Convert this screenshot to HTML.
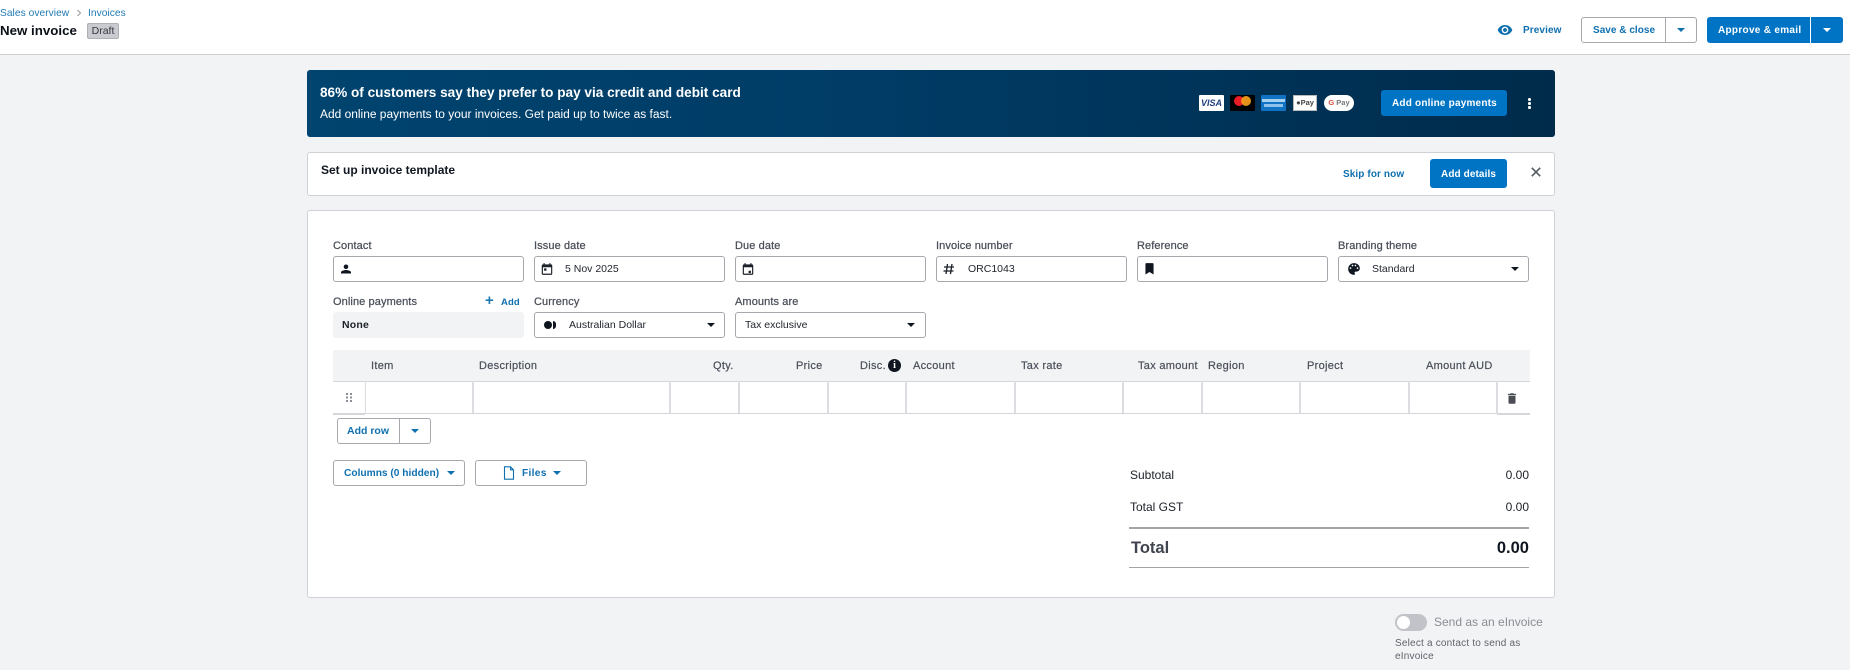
<!DOCTYPE html>
<html><head><meta charset="utf-8"><title>New invoice</title>
<style>
html,body{margin:0;padding:0;width:1850px;height:670px;overflow:hidden;background:#f2f3f5;font-family:"Liberation Sans",sans-serif;color:#0f1620}
.a{position:absolute}
.t{position:absolute;white-space:nowrap;line-height:16px;font-size:11px}
.l{color:#4a4f59;letter-spacing:.1px;-webkit-text-stroke:.25px #4a4f59}
.b{color:#0f70b0;font-weight:700;font-size:10px;letter-spacing:.1px}
.box{position:absolute;box-sizing:border-box;background:#fff;border:1px solid #a6a8ad;border-radius:3px}
.btn{position:absolute;box-sizing:border-box;background:#0074c4;border-radius:3px}
.w{color:#fff;font-weight:700;font-size:10px;letter-spacing:.2px}
.v{color:#22262e;font-size:10.5px}
.th{color:#4a4f59;letter-spacing:.3px;-webkit-text-stroke:.2px #4a4f59}
.caret{position:absolute;width:0;height:0;border-left:4.5px solid transparent;border-right:4.5px solid transparent;border-top:4px solid #0f70b0}
.caret.k{border-top-color:#0f1620}
.caret.wh{border-top-color:#fff}
.vl{position:absolute;top:381px;height:32px;width:2px;background:#dcdde0}
svg{position:absolute;display:block}
</style></head><body>
<div class="a" style="left:0;top:0;width:1850px;height:54px;background:#fff;border-bottom:1px solid #ccced2"></div>
<div class="t" style="left:0;top:6px;color:#1f7ab3;letter-spacing:.05px;font-size:10.2px">Sales overview</div>
<svg style="left:76px;top:9px" width="6" height="8" viewBox="0 0 6 8"><path d="M1.500 1l3 3-3 3" fill="none" stroke="#999" stroke-width="1"/></svg>
<div class="t" style="left:88px;top:6px;color:#1f7ab3;letter-spacing:.05px;font-size:10.2px">Invoices</div>
<div class="t" style="left:0;top:23px;font-size:13.3px;font-weight:700;color:#0b0f18">New invoice</div>
<div class="a" style="left:87px;top:23px;width:32px;height:16px;box-sizing:border-box;background:#c9cbd0;border:1px solid #aeb0b5;border-radius:2px;font-size:10.5px;line-height:14px;text-align:center;color:#33373f">Draft</div>

<svg style="left:1497px;top:22px" width="16" height="16" viewBox="0 0 24 24"><path fill="#0f70b0" d="M12 4.500C7 4.500 2.730 7.610 1 12c1.730 4.390 6 7.500 11 7.500s9.270-3.110 11-7.500c-1.730-4.390-6-7.500-11-7.500zM12 17c-2.760 0-5-2.240-5-5s2.240-5 5-5 5 2.240 5 5-2.240 5-5 5zm0-8c-1.660 0-3 1.340-3 3s1.340 3 3 3 3-1.340 3-3-1.340-3-3-3z"/></svg>
<div class="t b" style="left:1523px;top:23px">Preview</div>
<div class="box" style="left:1581px;top:17px;width:116px;height:26px"></div>
<div class="a" style="left:1665px;top:17px;width:1px;height:26px;background:#a6a8ad"></div>
<div class="t b" style="left:1593px;top:23px;letter-spacing:.03px">Save &amp; close</div>
<div class="caret" style="left:1677px;top:28px"></div>
<div class="btn" style="left:1707px;top:17px;width:103px;height:26px;border-radius:3px 0 0 3px"></div>
<div class="btn" style="left:1811px;top:17px;width:32px;height:26px;border-radius:0 3px 3px 0"></div>
<div class="t w" style="left:1718px;top:23px;letter-spacing:.3px">Approve &amp; email</div>
<div class="caret wh" style="left:1823px;top:28px"></div>

<div class="a" style="left:307px;top:70px;width:1248px;height:67px;border-radius:3px;background:linear-gradient(90deg,#00446f 0%,#003c66 45%,#002b4b 100%)"></div>
<div class="t" style="left:320px;top:85px;font-size:13.6px;font-weight:700;color:#fff">86% of customers say they prefer to pay via credit and debit card</div>
<div class="t" style="left:320px;top:106px;font-size:11.96px;color:#fff">Add online payments to your invoices. Get paid up to twice as fast.</div>

<div class="a" style="left:1199px;top:95px;width:25px;height:16px;background:#fff;border-radius:1px;text-align:center;font:italic 700 9px/16px 'Liberation Sans',sans-serif;color:#1f3f7f">VISA</div>
<div class="a" style="left:1230px;top:95px;width:25px;height:16px;background:#000;border-radius:1px"></div>
<div class="a" style="left:1234px;top:96px;width:10px;height:10px;border-radius:50%;background:#eb1c26"></div>
<div class="a" style="left:1241px;top:96px;width:10px;height:10px;border-radius:50%;background:#f79e1b;opacity:.92"></div>
<div class="a" style="left:1261px;top:95px;width:25px;height:16px;background:#1173c4;border-radius:1px"></div>
<div class="a" style="left:1262px;top:99px;width:23px;height:3px;background:#a8d0ef"></div>
<div class="a" style="left:1264px;top:104px;width:19px;height:3px;background:#8fc2ea"></div>
<div class="a" style="left:1293px;top:95px;width:24px;height:16px;background:#fff;border:1px solid #bbb;box-sizing:border-box;text-align:center;font:700 7.5px/14px 'Liberation Sans',sans-serif;color:#444">●Pay</div>
<div class="a" style="left:1324px;top:95px;width:30px;height:16px;background:#fff;border-radius:8px;text-align:center;font:700 7.5px/16px 'Liberation Sans',sans-serif;color:#777"><span style="color:#d8503f">G</span> Pay</div>

<div class="btn" style="left:1381px;top:90px;width:126px;height:26px"></div>
<div class="t w" style="left:1392px;top:96px">Add online payments</div>
<div class="a" style="left:1528px;top:98px;width:2.5px;height:2.5px;background:#fff;border-radius:50%;box-shadow:0 4px 0 #fff,0 8px 0 #fff"></div>

<div class="box" style="left:307px;top:152px;width:1248px;height:44px;border-color:#cfd1d4"></div>
<div class="t" style="left:321px;top:162px;font-size:12px;font-weight:700;color:#0f1620">Set up invoice template</div>
<div class="t b" style="left:1343px;top:167px">Skip for now</div>
<div class="btn" style="left:1430px;top:159px;width:77px;height:29px"></div>
<div class="t w" style="left:1441px;top:167px;letter-spacing:.1px">Add details</div>
<svg style="left:1531px;top:167px" width="10" height="10" viewBox="0 0 10 10"><path d="M.8.8l8.400 8.400M9.200.8L.8 9.200" stroke="#555a63" stroke-width="1.600" fill="none"/></svg>

<div class="box" style="left:307px;top:210px;width:1248px;height:388px;border-color:#cfd1d4"></div>

<div class="t l" style="left:333px;top:238px">Contact</div>
<div class="box" style="left:333px;top:256px;width:191px;height:26px"></div>
<svg style="left:340px;top:263px" width="12" height="12" viewBox="0 0 24 24"><path fill="#0f1620" d="M12 12c2.800 0 4.600-2 4.600-4.500S14.800 3 12 3 7.400 5 7.400 7.500 9.200 12 12 12zm0 2c-3 0-10 1.500-10 4.500V21h20v-2.500c0-3-7-4.500-10-4.500z"/></svg>

<div class="t l" style="left:534px;top:238px">Issue date</div>
<div class="box" style="left:534px;top:256px;width:191px;height:26px"></div>
<svg style="left:540px;top:262px" width="14" height="14" viewBox="0 0 24 24"><path fill="#1c2028" d="M19 4h-1V2h-2v2H8V2H6v2H5C3.900 4 3 4.900 3 6v14c0 1.100.9 2 2 2h14c1.100 0 2-.9 2-2V6c0-1.100-.9-2-2-2zm0 16H5V9h14zM7 11h4v4H7z"/></svg>
<div class="t v" style="left:565px;top:261px">5 Nov 2025</div>

<div class="t l" style="left:735px;top:238px">Due date</div>
<div class="box" style="left:735px;top:256px;width:191px;height:26px"></div>
<svg style="left:741px;top:262px" width="14" height="14" viewBox="0 0 24 24"><path fill="#1c2028" d="M19 4h-1V2h-2v2H8V2H6v2H5C3.900 4 3 4.900 3 6v14c0 1.100.9 2 2 2h14c1.100 0 2-.9 2-2V6c0-1.100-.9-2-2-2zm0 16H5V9h14zM13 15h4v4h-4z"/></svg>

<div class="t l" style="left:936px;top:238px">Invoice number</div>
<div class="box" style="left:936px;top:256px;width:191px;height:26px"></div>
<svg style="left:943px;top:263px" width="12" height="12" viewBox="0 0 12 12"><path d="M4.500 1L3 11M9 1L7.500 11M1 4h10M.5 8h10" stroke="#1c2028" stroke-width="1.300" fill="none"/></svg>
<div class="t v" style="left:968px;top:261px">ORC1043</div>

<div class="t l" style="left:1137px;top:238px">Reference</div>
<div class="box" style="left:1137px;top:256px;width:191px;height:26px"></div>
<svg style="left:1143px;top:262px" width="13" height="13" viewBox="0 0 24 24"><path fill="#0f1620" d="M18 2H6C5 2 4.500 2.900 4.500 4v19L12 18.500 19.500 23V4c0-1.100-.5-2-1.500-2z"/></svg>

<div class="t l" style="left:1338px;top:238px">Branding theme</div>
<div class="box" style="left:1338px;top:256px;width:191px;height:26px"></div>
<svg style="left:1347px;top:262px" width="14" height="14" viewBox="0 0 24 24"><path fill="#0f1620" d="M12 2a10 10 0 0 0 0 20c.9 0 1.700-.7 1.700-1.700 0-.4-.2-.8-.4-1.100-.3-.3-.4-.7-.4-1.100 0-.9.7-1.700 1.700-1.700H16.500c3 0 5.500-2.400 5.500-5.400C22 6 17.500 2 12 2zM6 12a1.500 1.500 0 1 1 0-3 1.500 1.500 0 0 1 0 3zm3.500-4.500a1.500 1.500 0 1 1 0-3 1.500 1.500 0 0 1 0 3zm5 0a1.500 1.500 0 1 1 0-3 1.500 1.500 0 0 1 0 3zM18 12a1.500 1.500 0 1 1 0-3 1.500 1.500 0 0 1 0 3z"/></svg>
<div class="t v" style="left:1372px;top:261px">Standard</div>
<div class="caret k" style="left:1511px;top:267px"></div>

<div class="t l" style="left:333px;top:294px">Online payments</div>
<div class="t" style="left:485px;top:293px;font-size:15px;color:#1f7ab3;font-weight:700">+</div>
<div class="t b" style="left:501px;top:295px;font-size:9.5px">Add</div>
<div class="a" style="left:333px;top:312px;width:191px;height:26px;background:#f2f3f5;border-radius:3px"></div>
<div class="t" style="left:342px;top:317px;font-weight:700;font-size:10.5px;letter-spacing:.2px;color:#1c2028">None</div>

<div class="t l" style="left:534px;top:294px">Currency</div>
<div class="box" style="left:534px;top:312px;width:191px;height:26px"></div>
<div class="a" style="left:544px;top:321px;width:8px;height:8px;border-radius:50%;background:#0f1620"></div>
<div class="a" style="left:553px;top:321px;width:3px;height:8px;border-radius:0 4px 4px 0;background:#0f1620"></div>
<div class="t v" style="left:569px;top:317px">Australian Dollar</div>
<div class="caret k" style="left:707px;top:323px"></div>

<div class="t l" style="left:735px;top:294px">Amounts are</div>
<div class="box" style="left:735px;top:312px;width:191px;height:26px"></div>
<div class="t v" style="left:745px;top:317px">Tax exclusive</div>
<div class="caret k" style="left:907px;top:323px"></div>

<div class="a" style="left:333px;top:350px;width:1197px;height:31px;background:#f2f3f5;border-bottom:1px solid #d5d6d9"></div>
<div class="t th" style="left:371px;top:358px">Item</div>
<div class="t th" style="left:479px;top:358px">Description</div>
<div class="t th" style="left:713px;top:358px">Qty.</div>
<div class="t th" style="left:796px;top:358px">Price</div>
<div class="t th" style="left:860px;top:358px">Disc.</div>
<div class="a" style="left:888px;top:359px;width:13px;height:13px;border-radius:50%;background:#0f1620;color:#fff;font:700 10px/13px 'Liberation Serif',serif;text-align:center">i</div>
<div class="t th" style="left:913px;top:358px">Account</div>
<div class="t th" style="left:1021px;top:358px">Tax rate</div>
<div class="t th" style="left:1138px;top:358px">Tax amount</div>
<div class="t th" style="left:1208px;top:358px">Region</div>
<div class="t th" style="left:1307px;top:358px">Project</div>
<div class="t th" style="left:1426px;top:358px">Amount AUD</div>

<div class="a" style="left:365px;top:413px;width:1131px;height:1px;background:#d5d6d9"></div>
<div class="a" style="left:333px;top:413px;width:32px;height:2px;background:#d5d6d9"></div>
<div class="a" style="left:1497px;top:413px;width:33px;height:2px;background:#d5d6d9"></div>
<div class="vl" style="left:365px;width:1px"></div>
<div class="vl" style="left:472px"></div>
<div class="vl" style="left:669px"></div>
<div class="vl" style="left:738px"></div>
<div class="vl" style="left:827px"></div>
<div class="vl" style="left:905px"></div>
<div class="vl" style="left:1014px"></div>
<div class="vl" style="left:1122px"></div>
<div class="vl" style="left:1201px"></div>
<div class="vl" style="left:1299px"></div>
<div class="vl" style="left:1408px"></div>
<div class="vl" style="left:1496px;height:33px"></div>
<svg style="left:346px;top:393px" width="7" height="9" viewBox="0 0 7 9"><g fill="#8b8e94"><rect x="0" y="0" width="2" height="2"/><rect x="4" y="0" width="2" height="2"/><rect x="0" y="3.500" width="2" height="2"/><rect x="4" y="3.500" width="2" height="2"/><rect x="0" y="7" width="2" height="2"/><rect x="4" y="7" width="2" height="2"/></g></svg>
<svg style="left:1505px;top:391px" width="14" height="15" viewBox="0 0 24 24"><path fill="#4a4d53" d="M6 19c0 1.100.9 2 2 2h8c1.100 0 2-.9 2-2V7H6zM19 4h-3.500l-1-1h-5l-1 1H5v2h14z"/></svg>

<div class="box" style="left:337px;top:418px;width:94px;height:26px"></div>
<div class="a" style="left:399px;top:418px;width:1px;height:26px;background:#a6a8ad"></div>
<div class="t b" style="left:347px;top:423px;font-size:10.5px;letter-spacing:0">Add row</div>
<div class="caret" style="left:411px;top:429px"></div>

<div class="box" style="left:333px;top:460px;width:132px;height:26px"></div>
<div class="t b" style="left:344px;top:466px;font-size:10.2px;letter-spacing:0">Columns (0 hidden)</div>
<div class="caret" style="left:447px;top:471px"></div>
<div class="box" style="left:475px;top:460px;width:112px;height:26px"></div>
<svg style="left:503px;top:466px" width="12" height="14" viewBox="0 0 12 14"><path d="M1.500.8h6l3 3v9.400h-9z M7.500.8v3h3" fill="none" stroke="#0f70b0" stroke-width="1.100"/></svg>
<div class="t b" style="left:522px;top:466px;font-size:10.2px;letter-spacing:.3px">Files</div>
<div class="caret" style="left:553px;top:471px"></div>

<div class="t" style="left:1130px;top:467px;font-size:12px;color:#1c2028">Subtotal</div>
<div class="t" style="left:1489px;width:40px;text-align:right;top:467px;font-size:12px;color:#1c2028">0.00</div>
<div class="t" style="left:1130px;top:499px;font-size:12px;color:#1c2028">Total GST</div>
<div class="t" style="left:1489px;width:40px;text-align:right;top:499px;font-size:12px;color:#1c2028">0.00</div>
<div class="a" style="left:1129px;top:527px;width:400px;height:2px;background:#a2a4a8"></div>
<div class="t" style="left:1131px;top:540px;font-size:16.500px;font-weight:700;color:#40444f">Total</div>
<div class="t" style="left:1469px;width:60px;text-align:right;top:540px;font-size:16.500px;font-weight:700;color:#0f1620">0.00</div>
<div class="a" style="left:1129px;top:567px;width:400px;height:1px;background:#a2a4a8"></div>

<div class="a" style="left:1395px;top:614px;width:32px;height:17px;border-radius:9px;background:#c1c3c8"></div>
<div class="a" style="left:1397px;top:616px;width:13px;height:13px;border-radius:50%;background:#fff"></div>
<div class="t" style="left:1434px;top:614px;font-size:12px;color:#8a8d94">Send as an eInvoice</div>
<div class="t" style="left:1395px;top:636px;font-size:10px;color:#5f636b;letter-spacing:.2px">Select a contact to send as</div>
<div class="t" style="left:1395px;top:649px;font-size:10px;color:#5f636b;letter-spacing:.2px">eInvoice</div>
</body></html>
